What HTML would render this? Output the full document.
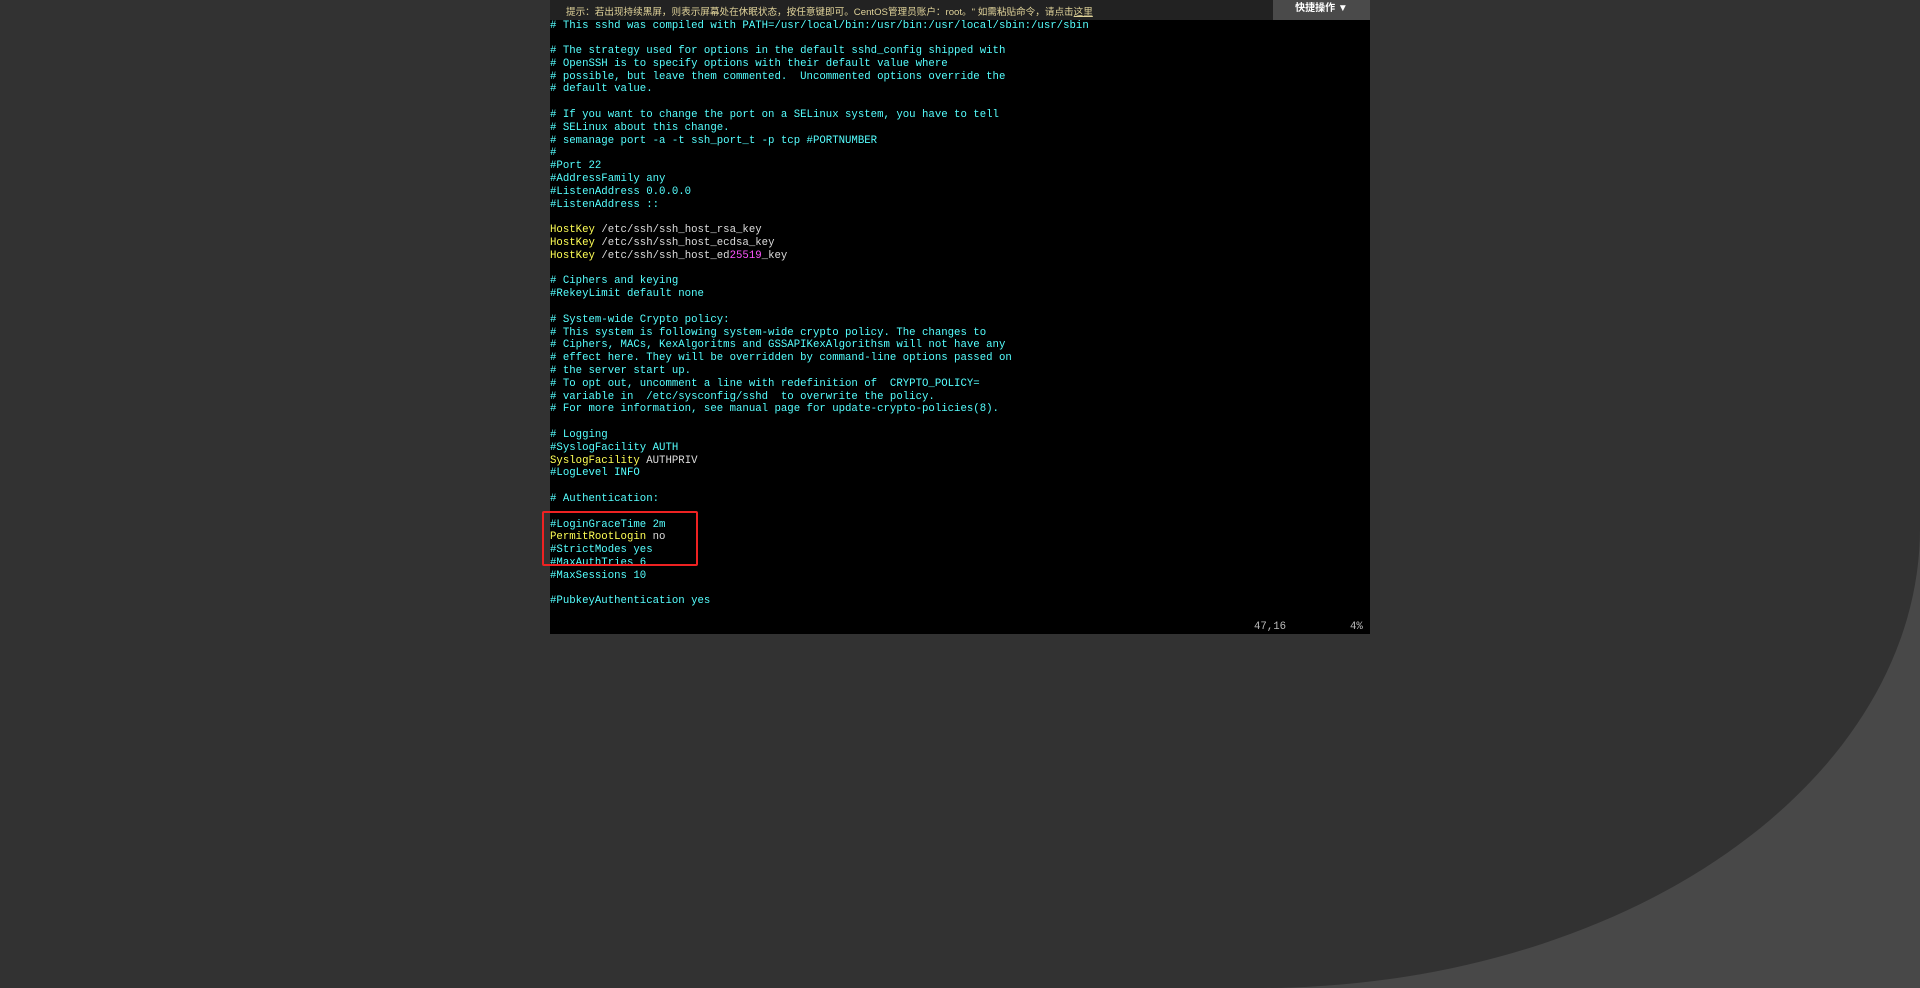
<!DOCTYPE html>
<html><head><meta charset="utf-8"><style>
html,body{margin:0;padding:0;width:1920px;height:988px;overflow:hidden;background:#484848;}
.dark{position:absolute;left:0;top:0;width:1920px;height:988px;background:#323232;border-bottom-right-radius:660px 460px;}
.term{position:absolute;left:550px;top:0;width:820px;height:634px;background:#000;}
.bar{position:absolute;left:0;top:0;width:820px;height:20px;background:#222;}
.bar .t{position:absolute;left:16px;top:4px;font:9.6px "Liberation Sans","Noto Sans CJK SC",sans-serif;color:#e0d39a;white-space:nowrap;}
.bar .t u{text-decoration:underline;}
.btn{position:absolute;left:723px;top:0;width:97px;height:20px;background:#4a4a4a;color:#fff;font:bold 10px "Liberation Sans","Noto Sans CJK SC",sans-serif;line-height:18px;text-align:center;}
pre{position:absolute;left:0;top:19.5px;margin:0;font:10.7px/12.79px "Liberation Mono",monospace;color:#5ff;white-space:pre;}
.y{color:#ff5;} .w{color:#ddd;} .m{color:#f5f;}
.box{position:absolute;left:542px;top:511px;width:152px;height:51px;border:2px solid #e22;border-radius:2px;}
.st{position:absolute;top:621px;font:10.7px "Liberation Mono",monospace;color:#bbb;}
</style></head><body>
<div class="dark"></div>
<div class="term">
<div class="bar"><div class="t">提示：若出现持续黑屏，则表示屏幕处在休眠状态，按任意键即可。CentOS管理员账户：root。" 如需粘贴命令，请点击<u>这里</u></div><div class="btn">快捷操作 ▼</div></div>
<pre># This sshd was compiled with PATH=/usr/local/bin:/usr/bin:/usr/local/sbin:/usr/sbin

# The strategy used for options in the default sshd_config shipped with
# OpenSSH is to specify options with their default value where
# possible, but leave them commented.  Uncommented options override the
# default value.

# If you want to change the port on a SELinux system, you have to tell
# SELinux about this change.
# semanage port -a -t ssh_port_t -p tcp #PORTNUMBER
#
#Port 22
#AddressFamily any
#ListenAddress 0.0.0.0
#ListenAddress ::

<span class="y">HostKey</span><span class="w"> /etc/ssh/ssh_host_rsa_key</span>
<span class="y">HostKey</span><span class="w"> /etc/ssh/ssh_host_ecdsa_key</span>
<span class="y">HostKey</span><span class="w"> /etc/ssh/ssh_host_ed</span><span class="m">25519</span><span class="w">_key</span>

# Ciphers and keying
#RekeyLimit default none

# System-wide Crypto policy:
# This system is following system-wide crypto policy. The changes to
# Ciphers, MACs, KexAlgoritms and GSSAPIKexAlgorithsm will not have any
# effect here. They will be overridden by command-line options passed on
# the server start up.
# To opt out, uncomment a line with redefinition of  CRYPTO_POLICY=
# variable in  /etc/sysconfig/sshd  to overwrite the policy.
# For more information, see manual page for update-crypto-policies(8).

# Logging
#SyslogFacility AUTH
<span class="y">SyslogFacility</span><span class="w"> AUTHPRIV</span>
#LogLevel INFO

# Authentication:

#LoginGraceTime 2m
<span class="y">PermitRootLogin</span><span class="w"> no</span>
#StrictModes yes
#MaxAuthTries 6
#MaxSessions 10

#PubkeyAuthentication yes</pre>
<div class="st" style="left:704px">47,16</div>
<div class="st" style="left:800px">4%</div>
</div>
<div class="box"></div>
</body></html>
